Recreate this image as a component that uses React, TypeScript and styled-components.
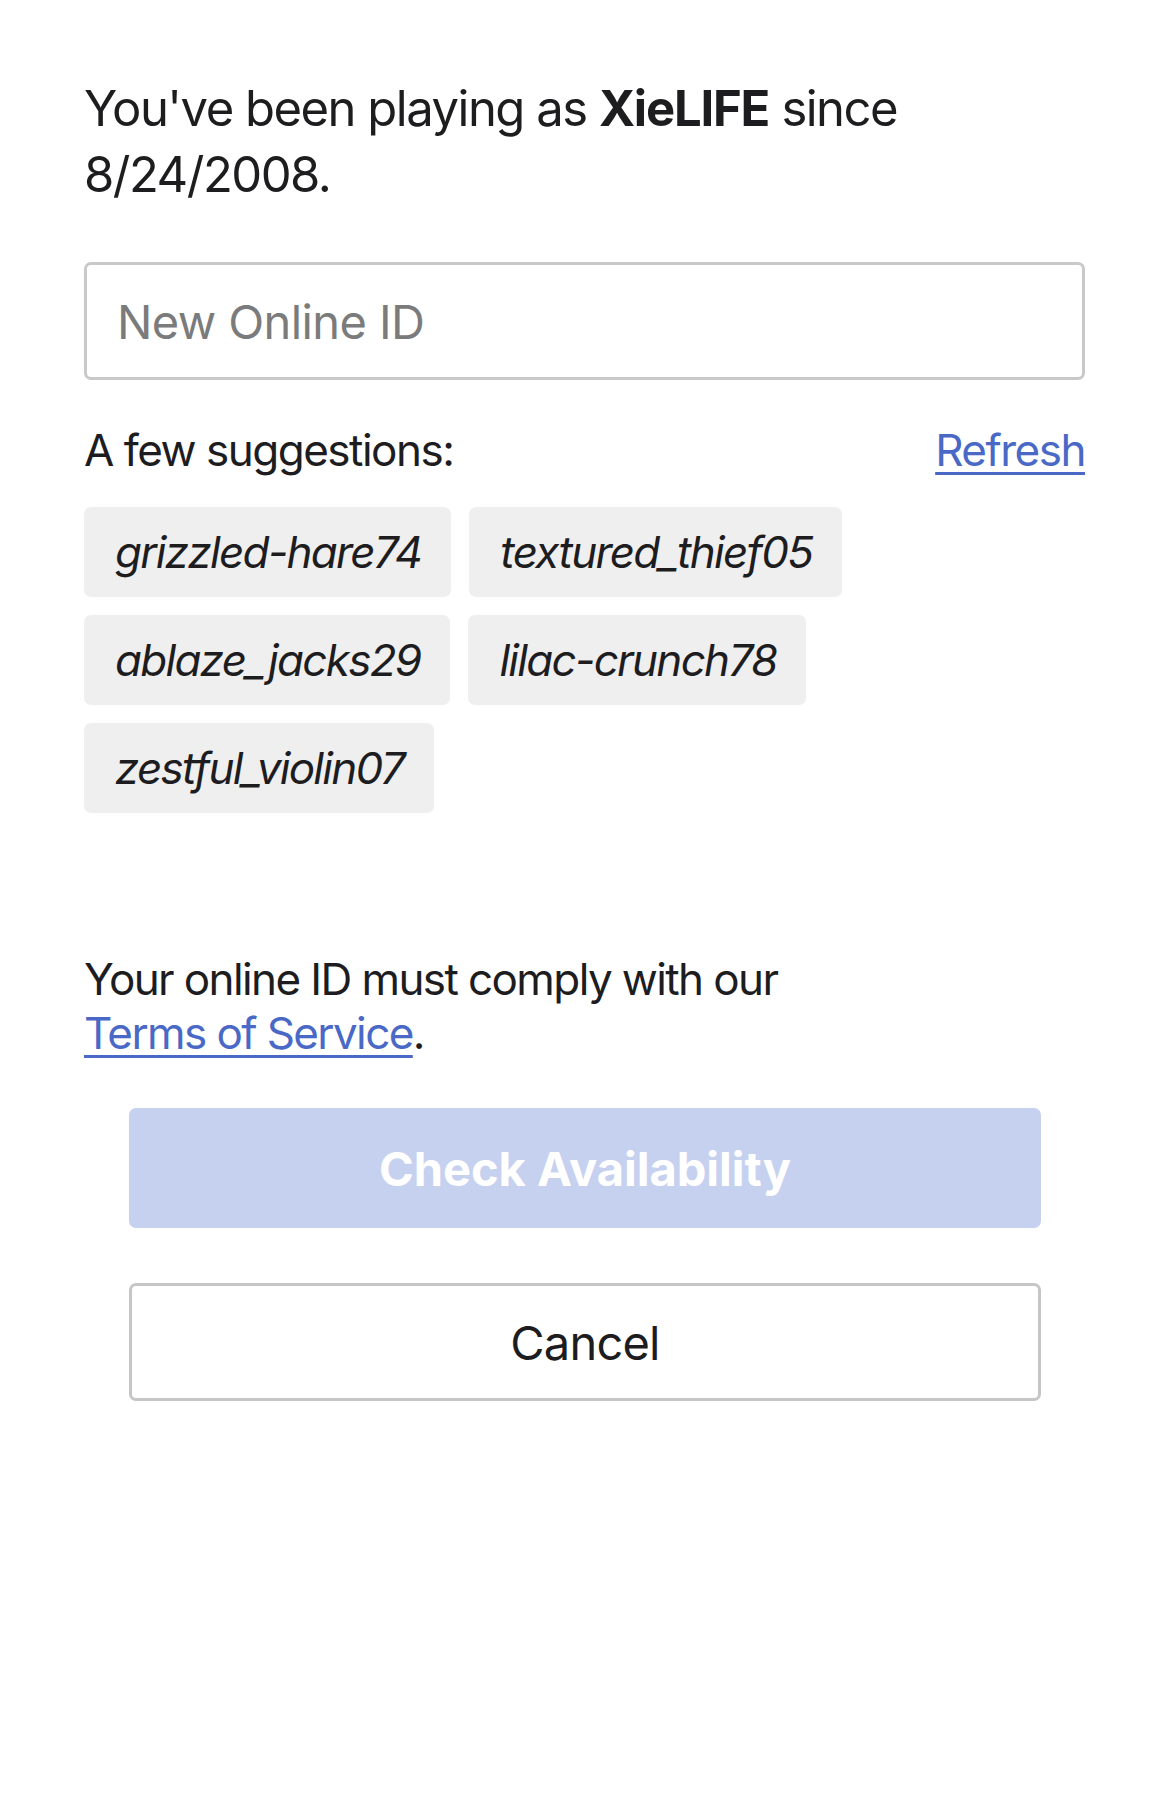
import React from "react";
import styled, { createGlobalStyle } from "styled-components";

const GlobalStyle = createGlobalStyle`
  html, body {
    margin: 0;
    padding: 0;
    background: #ffffff;
  }
  body {
    font-family: Inter, "Noto Sans", "Liberation Sans", sans-serif;
    color: #1d1d1f;
    -webkit-font-smoothing: antialiased;
  }
  * { box-sizing: border-box; }
`;

const Page = styled.main`
  width: 1170px;
  min-height: 1804px;
  padding: 76px 85px 0 84px;
  display: flex;
  flex-direction: column;
  background: #ffffff;
`;

const Intro = styled.p`
  margin: 0;
  font-size: 49px;
  line-height: 66px;
  letter-spacing: -1.5px;
  font-weight: 400;
  color: #1d1d1f;
  b {
    font-weight: 700;
    letter-spacing: -1.2px;
  }
`;

const IdInput = styled.input`
  margin-top: 54px;
  width: 100%;
  height: 118px;
  border: 3px solid #c9c9c9;
  border-radius: 7px;
  padding: 0 30px 0 30px;
  font-family: inherit;
  font-size: 47px;
  letter-spacing: -0.6px;
  color: #1d1d1f;
  background: #ffffff;
  outline: none;
  &::placeholder {
    color: #7b7b7b;
  }
`;

const SuggestHeader = styled.div`
  margin-top: 43px;
  display: flex;
  justify-content: space-between;
  align-items: baseline;
  font-size: 44px;
  line-height: 54px;
  letter-spacing: -1.5px;
`;

const Link = styled.a`
  color: #4a69c6;
  text-decoration: underline;
  text-decoration-thickness: 3px;
  text-underline-offset: 6px;
  cursor: pointer;
`;

const Chips = styled.div`
  margin-top: 30px;
  display: flex;
  flex-wrap: wrap;
  gap: 18px;
`;

const Chip = styled.button`
  height: 90px;
  padding: 0 30px 0 31px;
  border: none;
  border-radius: 7px;
  background: #efefef;
  font-family: inherit;
  font-size: 44px;
  font-style: italic;
  letter-spacing: -1.7px;
  color: #1d1d1f;
  display: flex;
  align-items: center;
`;

const Terms = styled.p`
  margin: 139px 0 0;
  font-size: 44px;
  line-height: 54px;
  letter-spacing: -1.6px;
`;

const PrimaryButton = styled.button`
  margin: 48px 44px 0 45px;
  height: 120px;
  border: none;
  border-radius: 7px;
  background: #c6d1f0;
  color: #ffffff;
  font-family: inherit;
  font-size: 47px;
  font-weight: 700;
`;

const SecondaryButton = styled.button`
  margin: 55px 44px 0 45px;
  height: 118px;
  border: 3px solid #c6c6c6;
  border-radius: 7px;
  background: #ffffff;
  color: #1d1d1f;
  font-family: inherit;
  font-size: 47px;
  letter-spacing: -0.8px;
  font-weight: 400;
`;

const suggestions = [
  "grizzled-hare74",
  "textured_thief05",
  "ablaze_jacks29",
  "lilac-crunch78",
  "zestful_violin07",
];

export default function App() {
  return (
    <>
      <GlobalStyle />
      <Page>
        <Intro>
          You've been playing as <b>XieLIFE</b> since 8/24/2008.
        </Intro>
        <IdInput placeholder="New Online ID" />
        <SuggestHeader>
          <span>A few suggestions:</span>
          <Link>Refresh</Link>
        </SuggestHeader>
        <Chips>
          {suggestions.map((s) => (
            <Chip key={s}>{s}</Chip>
          ))}
        </Chips>
        <Terms>
          Your online ID must comply with our
          <br />
          <Link>Terms of Service</Link>.
        </Terms>
        <PrimaryButton>Check Availability</PrimaryButton>
        <SecondaryButton>Cancel</SecondaryButton>
      </Page>
    </>
  );
}
